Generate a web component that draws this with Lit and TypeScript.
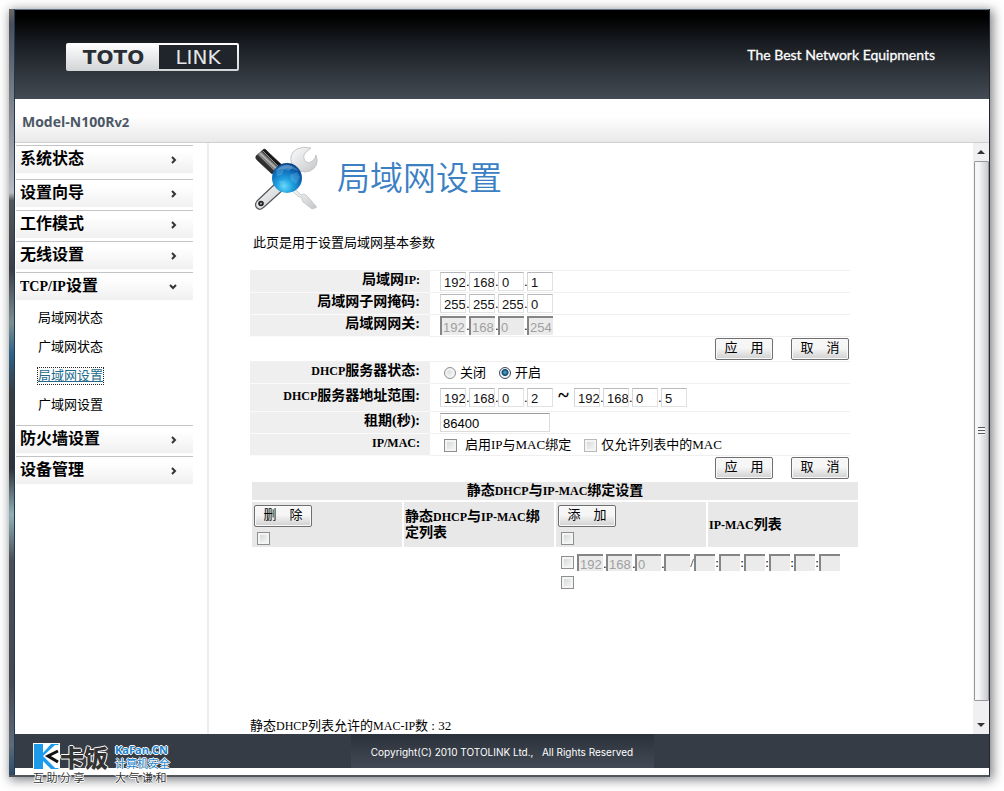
import { LitElement, html, css, svg, nothing } from "lit";
import { customElement, property } from "lit/decorators.js";

interface MenuEntry {
  label: unknown;
  open?: boolean;
  children?: { label: string; active?: boolean }[];
}

const MENU: MenuEntry[] = [
  { label: "系统状态" },
  { label: "设置向导" },
  { label: "工作模式" },
  { label: "无线设置" },
  {
    label: html`<span class="en">TCP/IP</span>设置`,
    open: true,
    children: [
      { label: "局域网状态" },
      { label: "广域网状态" },
      { label: "局域网设置", active: true },
      { label: "广域网设置" },
    ],
  },
  { label: "防火墙设置" },
  { label: "设备管理" },
];

const toolsIcon = svg`
  <defs>
    <radialGradient id="globe" cx="0.42" cy="0.78" r="0.8">
      <stop offset="0" stop-color="#5fd8fb"/>
      <stop offset="0.35" stop-color="#1f9ddd"/>
      <stop offset="0.75" stop-color="#0a5fae"/>
      <stop offset="1" stop-color="#0a3f80"/>
    </radialGradient>
    <linearGradient id="steel" x1="0" y1="0" x2="1" y2="1">
      <stop offset="0" stop-color="#fdfdfd"/>
      <stop offset="1" stop-color="#c3c6c9"/>
    </linearGradient>
    <linearGradient id="grip" x1="0" y1="1" x2="1" y2="0">
      <stop offset="0" stop-color="#111"/>
      <stop offset="0.4" stop-color="#333"/>
      <stop offset="0.5" stop-color="#bbb"/>
      <stop offset="0.6" stop-color="#1a1a1a"/>
      <stop offset="1" stop-color="#000"/>
    </linearGradient>
  </defs>
  <path d="M39 41 L47 49 L49 48 Q52 48 54 51 L62 60 Q63 62 61 62 L58 63 L49 56 Q47 53 48 51 L45 51 L36 43 Z" fill="url(#steel)" stroke="#c4c6c8" stroke-width="0.8"/>
  <path d="M22 37 L3 55 Q0 59 3 62 Q6 65 10 61 L30 43 Z" fill="url(#steel)" stroke="#55585b" stroke-width="1.2"/>
  <circle cx="7" cy="57.500" r="2.800" fill="#222"/>
  <circle cx="7" cy="57.500" r="1" fill="#bbb"/>
  <path d="M38 19 Q34 8 43 3 Q49 0 57 2 L51 7 Q48 12 52 16 Q57 18 61 12 L62 9 Q66 20 56 25 Q51 27 46 25 Z" fill="url(#steel)" stroke="#c4c6c8" stroke-width="1"/>
  <path d="M2 10 L10 3 Q12 3 14 6 L28 19 L18 28 L3 14 Q1 12 2 10 Z" fill="url(#grip)" stroke="#222" stroke-width="0.6"/>
  <path d="M5 9 L20 24 M9 5 L24 20" stroke="#8f8f8f" stroke-width="1" fill="none"/>
  <circle cx="33" cy="32" r="15" fill="url(#globe)"/>
  <path d="M22 25 Q27 19 34 19 L39 21 L35 25 L30 24 L28 29 L23 30 Z M36 29 L43 26 L46 31 L42 38 L37 34 Z M25 35 L31 35 L31 41 L27 42 Z" fill="#8fd6f7" opacity="0.25"/>
  <path d="M21 25 Q32 12 45 25 Q33 20 21 25 Z" fill="#fff" opacity="0.2"/>`;

@customElement("ip-field")
class IpField extends LitElement {
  @property({ type: Array }) parts: string[] = [];
  @property() name = "";
  @property({ type: Boolean }) off = false;

  static styles = css`
    :host {
      display: flex;
      align-items: stretch;
      height: 19px;
      font: 13px/19px "Liberation Sans", sans-serif;
    }
    .octet {
      box-sizing: border-box;
      width: 26px;
      margin: 0;
      padding: 2px 0 0 3px;
      border: 1px solid #e2e2e2;
      border-top-color: #b5b8bc;
      border-left-color: #d4d6d8;
      border-radius: 0;
      background: #fff;
      color: #111;
      font: 13px/15px "Liberation Sans", sans-serif;
    }
    .octet:disabled {
      padding: 2px 0 0 1px;
      border: 0;
      border-top: 2px solid #858585;
      border-left: 2px solid #858585;
      background: #ebebeb;
      color: #a0a0a0;
    }
    .dot {
      width: 3px;
      text-align: center;
    }
  `;

  render() {
    return this.parts.map(
      (p, i) => html`${i ? html`<span class="dot">.</span>` : nothing}<input
          class="octet"
          aria-label="${this.name} ${i + 1}"
          maxlength="3"
          .value=${p}
          ?disabled=${this.off}
        />`
    );
  }
}

@customElement("app-root")
class AppRoot extends LitElement {
  static styles = css`
    :host {
      display: block;
      background: #fff;
      color: #000;
      font: 13px/18px "Liberation Serif", "Noto Sans CJK SC", serif;
    }
    * {
      box-sizing: border-box;
    }
    .page {
      display: flex;
      min-height: 100vh;
      padding: 9px 14px 14px 9px;
    }
    .window {
      position: relative;
      display: flex;
      flex: 1;
      box-shadow: 2px 2px 10px 1px rgba(40, 44, 52, 0.6);
      border-right: 1px solid #23262c;
      border-bottom: 2px solid #50565a;
      background: #fff;
    }
    .edge {
      flex: none;
      width: 6px;
      border-right: 1px solid #1d3a55;
      background: linear-gradient(#6e6866 0, #4a4e58 2%, #7d8288 12%, #b9bcc0 24%, #55585a 25%, #3c4045 34%, #7d9090 41%, #2f6288 45%, #3a3c40 50%, #2f3236 60%, #8fb0b8 66%, #4b4f55 72%, #46484e 88%, #5f6b78 96%, #2c4a68 100%);
    }
    .shell {
      display: flex;
      flex: 1;
      flex-direction: column;
      min-width: 0;
      padding-bottom: 7px;
    }
    .banner {
      display: flex;
      align-items: center;
      justify-content: space-between;
      height: 90px;
      padding: 4px 54px 0 51px;
      border-top: 1px solid #5d7388;
      background: linear-gradient(#000 8%, #1b1f24 40%, #434b54);
      color: #fff;
    }
    .slogan {
      padding-bottom: 4px;
      font: 400 14px/20px Lato, sans-serif;
      -webkit-text-stroke: 0.3px #fff;
    }
    .logo {
      display: flex;
      width: 173px;
      height: 28px;
      padding: 2px;
      border-radius: 2px;
      background: linear-gradient(#fff, #d2d4d6);
      color: #2a2f36;
      font: 400 20px/24px "DejaVu Sans", sans-serif;
      text-align: center;
    }
    .logo-a {
      flex: 1;
      font-weight: 700;
    }
    .logo-b {
      width: 78px;
      background: #20252c;
      color: #e4e6e8;
    }
    .model {
      display: flex;
      align-items: center;
      height: 44px;
      padding: 3px 0 0 7px;
      border-bottom: 1px solid #cfcfcf;
      background: linear-gradient(#fff 40%, #e9e9e9);
      color: #4b5764;
      font: 700 14px/20px "Open Sans", sans-serif;
    }
    .small {
      font-size: 13px;
    }
    .body {
      display: flex;
      flex: 1;
    }
    .side {
      flex: none;
      width: 194px;
      padding: 2px 14px 0 1px;
      border-right: 2px solid #ededed;
      font: 700 16px/24px "Liberation Serif", "Noto Sans CJK SC", serif;
    }
    .item {
      display: flex;
      align-items: center;
      justify-content: space-between;
      width: 100%;
      height: 28px;
      margin: 0 0 3px;
      padding: 0 16px 1px 4px;
      border: 0;
      border-top: 1px solid #c4c4c4;
      background: linear-gradient(#fff 20%, #f0f0f0);
      color: #000;
      font: inherit;
      text-align: left;
    }
    .first {
      margin-bottom: 6px;
    }
    .item .en {
      font-size: 14px;
    }
    .arrow {
      width: 8px;
      height: 8px;
      margin-top: 2px;
    }
    .sub {
      display: flex;
      flex-direction: column;
      align-items: flex-start;
      gap: 13px;
      padding: 7px 0 12px 22px;
      font-size: 13px;
      font-weight: 400;
      line-height: 16px;
    }
    .sub a {
      color: #000;
      text-decoration: none;
    }
    .sub .active {
      outline: 1px dotted #222;
      color: #22698a;
      text-decoration: underline;
    }
    .main {
      display: flex;
      flex: 1;
      flex-direction: column;
      min-width: 0;
      padding: 3px 16px 0 41px;
    }
    .heading {
      display: flex;
      align-items: center;
      gap: 17px;
      padding-left: 4px;
    }
    .tools {
      width: 66px;
      height: 66px;
    }
    h1 {
      margin: 0;
      padding-bottom: 6px;
      color: #3c80c4;
      font: 350 33px/40px "Noto Sans CJK SC", sans-serif;
    }
    .intro {
      margin: 22px 0 18px;
      padding-left: 3px;
    }
    .rows {
      max-width: 600px;
      border-top: 1px solid #f0f0f0;
    }
    .row {
      display: flex;
      height: 22px;
    }
    .tall {
      height: 28px;
    }
    .name {
      display: flex;
      align-items: center;
      justify-content: flex-end;
      width: 180px;
      padding: 0 10px 3px 0;
      border-bottom: 1px solid #fafafa;
      background: #efefef;
      font-weight: 700;
      font-size: 14px;
    }
    .en {
      font-size: 12px;
    }
    .value {
      display: flex;
      flex: 1;
      align-items: center;
      padding-left: 10px;
      border-bottom: 1px solid #efefef;
    }
    .tilde {
      width: 21px;
      padding-bottom: 6px;
      font: 700 20px/20px "Liberation Serif", serif;
      text-align: center;
    }
    .lease {
      width: 110px;
      height: 19px;
      padding: 2px 0 0 2px;
      border: 1px solid #dcdcdc;
      border-top-color: #9a9da1;
      font: 13px/15px "Liberation Sans", sans-serif;
    }
    .choice {
      display: flex;
      align-items: center;
      gap: 4px;
      padding: 1px 9px 0 4px;
    }
    .wide {
      gap: 8px;
    }
    .actions {
      display: flex;
      justify-content: flex-end;
      gap: 18px;
      max-width: 600px;
      height: 24px;
      padding: 1px 1px 0 0;
    }
    .btn {
      width: 58px;
      height: 22px;
      margin: 0;
      padding: 0 0 5px;
      border: 1px solid #6f6f6f;
      border-radius: 2px;
      background: linear-gradient(#f6f6f6 45%, #d0d0d0);
      box-shadow: inset 0 0 0 1px #fafafa;
      color: #000;
      font: 13px/15px "Noto Sans CJK SC", sans-serif;
    }
    .tick,
    .radio {
      flex: none;
      width: 13px;
      height: 13px;
      margin: 0;
      appearance: none;
      border: 1px solid #8e8f8f;
      background: linear-gradient(135deg, #cfd3d6, #fafafa);
      box-shadow: inset 0 0 0 2px #f4f4f4;
    }
    .light {
      border-color: #b9b9b9;
    }
    .radio {
      width: 12px;
      height: 12px;
      border-radius: 50%;
    }
    .radio:checked {
      border-color: #3a4a5a;
      background: radial-gradient(circle at 50% 45%, #4fb0dc 0, #12476b 3px, #f2f4f6 4px);
      box-shadow: none;
    }
    .bind {
      width: 100%;
      max-width: 610px;
      border-spacing: 2px;
      table-layout: fixed;
      font-size: 14px;
      line-height: 15px;
      text-align: left;
    }
    .bind th {
      padding: 0 1px;
      background: #e8e8e8;
    }
    .bind .caption {
      height: 18px;
      text-align: center;
    }
    .bind .cell {
      height: 45px;
    }
    .stack {
      display: flex;
      flex-direction: column;
      align-items: flex-start;
      gap: 5px;
      padding-left: 1px;
    }
    .stack .tick {
      margin-left: 3px;
    }
    .bind .entry {
      padding: 3px 2px 0 5px;
    }
    .line {
      display: flex;
      align-items: center;
      height: 20px;
      font: 13px/17px "Liberation Serif", serif;
    }
    .line .tick {
      margin-right: 3px;
    }
    .line ip-field,
    .mac {
      height: 17px;
    }
    .mac {
      width: 21px;
      padding: 0;
      border: 0;
      border-top: 2px solid #858585;
      border-left: 2px solid #858585;
      background: #ebebeb;
    }
    .sep {
      width: 4px;
      text-align: center;
    }
    .limit {
      margin: auto 0 0;
      line-height: 16px;
    }
    .scroll {
      display: flex;
      flex: none;
      flex-direction: column;
      align-items: center;
      width: 16px;
      background: #f0f0f2;
    }
    .cap {
      width: 8px;
      height: 4px;
      margin: 7px 0;
    }
    .thumb {
      display: flex;
      flex: 1;
      align-items: center;
      justify-content: center;
      width: 15px;
      margin-bottom: 15px;
      border: 1px solid #97979c;
      border-radius: 1px;
      background: linear-gradient(90deg, #f6f6f7 30%, #c9cacf);
    }
    .grip {
      width: 7px;
      height: 8px;
      background: repeating-linear-gradient(#55585c 0 1px, #f6f6f6 1px 3px);
    }
    .foot {
      display: flex;
      justify-content: center;
      height: 34px;
      background: #353c46;
    }
    .copy {
      width: 303px;
      background: linear-gradient(#2a313a, #434a55);
      color: #fff;
      font: 10px/37px Inter, sans-serif;
      text-align: center;
      white-space: nowrap;
    }
    .mark {
      position: absolute;
      bottom: -9px;
      left: 24px;
      display: grid;
      grid-template-columns: 82px auto;
      color: #333;
      font: 700 12px/14px "Noto Sans CJK SC", sans-serif;
      text-shadow: 1px 0 #fff, -1px 0 #fff, 0 1px #fff, 0 -1px #fff;
    }
    .brand {
      display: flex;
      align-items: center;
      height: 27px;
      font-size: 24px;
      font-weight: 900;
      line-height: 26px;
    }
    .k {
      flex: none;
      width: 27px;
      height: 27px;
    }
    .motto {
      font-size: 11px;
      font-weight: 400;
      white-space: pre;
    }
    .blue {
      display: flex;
      flex-direction: column;
      color: #1c86d0;
      font-weight: 400;
      font-size: 11px;
      line-height: 13px;
      white-space: nowrap;
    }
    .blue .latin {
      font: 700 11px/14px "Open Sans", sans-serif;
    }
  `;

  private tick(label: string, extra = "") {
    return html`<input type="checkbox" class="tick ${extra}" aria-label=${label} />`;
  }

  private actions() {
    return html`<div class="actions">
      <button class="btn">应　用</button>
      <button class="btn">取　消</button>
    </div>`;
  }

  private menuItem(m: MenuEntry, i: number) {
    return html`<button class="item ${i === 0 ? "first" : ""}" aria-expanded=${m.open ? "true" : "false"}>
        <span>${m.label}</span>
        <svg class="arrow" viewBox="0 0 8 8" aria-hidden="true">
          <path d=${m.open ? "M1 2 L4 5 L7 2" : "M3 1 L6 4 L3 7"} fill="none" stroke="#333" stroke-width="2" />
        </svg>
      </button>
      ${m.children
        ? html`<nav class="sub">
            ${m.children.map((c) => html`<a href="#" class=${c.active ? "active" : ""}>${c.label}</a>`)}
          </nav>`
        : nothing}`;
  }

  render() {
    const en = (t: string) => html`<span class="en">${t}</span>`;
    return html`<div class="page">
      <div class="window">
        <div class="edge"></div>
        <div class="shell">
          <header class="banner">
            <div class="logo"><span class="logo-a">TOTO</span><span class="logo-b">LINK</span></div>
            <span class="slogan">The Best Network Equipments</span>
          </header>
          <div class="model"><span>Model-N100R<span class="small">v2</span></span></div>
          <div class="body">
            <aside class="side">${MENU.map((m, i) => this.menuItem(m, i))}</aside>
            <main class="main">
              <div class="heading">
                <svg class="tools" viewBox="0 0 66 66" aria-hidden="true">${toolsIcon}</svg>
                <h1>局域网设置</h1>
              </div>
              <p class="intro">此页是用于设置局域网基本参数</p>
              <div class="rows">
                <div class="row">
                  <div class="name"><span>局域网${en("IP:")}</span></div>
                  <div class="value"><ip-field name="局域网IP" .parts=${["192", "168", "0", "1"]}></ip-field></div>
                </div>
                <div class="row">
                  <div class="name"><span>局域网子网掩码:</span></div>
                  <div class="value"><ip-field name="局域网子网掩码" .parts=${["255", "255", "255", "0"]}></ip-field></div>
                </div>
                <div class="row">
                  <div class="name"><span>局域网网关:</span></div>
                  <div class="value"><ip-field off name="局域网网关" .parts=${["192", "168", "0", "254"]}></ip-field></div>
                </div>
              </div>
              ${this.actions()}
              <div class="rows">
                <div class="row">
                  <div class="name"><span>${en("DHCP")}服务器状态:</span></div>
                  <div class="value">
                    <label class="choice"><input type="radio" class="radio" name="dhcp" />关闭</label>
                    <label class="choice"><input type="radio" class="radio" name="dhcp" checked />开启</label>
                  </div>
                </div>
                <div class="row tall">
                  <div class="name"><span>${en("DHCP")}服务器地址范围:</span></div>
                  <div class="value">
                    <ip-field name="起始地址" .parts=${["192", "168", "0", "2"]}></ip-field>
                    <span class="tilde">~</span>
                    <ip-field name="结束地址" .parts=${["192", "168", "0", "5"]}></ip-field>
                  </div>
                </div>
                <div class="row">
                  <label class="name" for="lease">租期(秒):</label>
                  <div class="value"><input id="lease" class="lease" value="86400" /></div>
                </div>
                <div class="row">
                  <div class="name"><span>${en("IP/MAC:")}</span></div>
                  <div class="value">
                    <label class="choice wide"><input type="checkbox" class="tick" />启用IP与MAC绑定</label>
                    <label class="choice"><input type="checkbox" class="tick light" />仅允许列表中的MAC</label>
                  </div>
                </div>
              </div>
              ${this.actions()}
              <table class="bind">
                <tr>
                  <th class="caption" colspan="4">静态${en("DHCP")}与${en("IP-MAC")}绑定设置</th>
                </tr>
                <tr>
                  <th class="cell">
                    <div class="stack"><button class="btn">删　除</button>${this.tick("全选绑定列表")}</div>
                  </th>
                  <th class="cell">静态${en("DHCP")}与${en("IP-MAC")}绑定列表</th>
                  <th class="cell">
                    <div class="stack"><button class="btn">添　加</button>${this.tick("全选列表")}</div>
                  </th>
                  <th class="cell">${en("IP-MAC")}列表</th>
                </tr>
                <tr>
                  <td colspan="2"></td>
                  <td class="entry" colspan="2">
                    <div class="line">
                      ${this.tick("选择条目")}
                      <ip-field off name="条目IP" .parts=${["192", "168", "0", ""]}></ip-field>
                      ${[0, 1, 2, 3, 4, 5].map(
                        (n) => html`<span class="sep">${n ? ":" : "/"}</span
                          ><input class="mac" aria-label="MAC ${n + 1}" disabled />`
                      )}
                    </div>
                    <div class="line">${this.tick("选择条目")}</div>
                  </td>
                </tr>
              </table>
              <p class="limit">静态${en("DHCP")}列表允许的${en("MAC-IP")}数 : 32</p>
            </main>
            <div class="scroll" aria-hidden="true">
              <svg class="cap" viewBox="0 0 8 4"><path d="M0 4 L4 0 L8 4 Z" fill="#333" /></svg>
              <div class="thumb"><span class="grip"></span></div>
              <svg class="cap" viewBox="0 0 8 4"><path d="M0 0 L4 4 L8 0 Z" fill="#333" /></svg>
            </div>
          </div>
          <footer class="foot"><div class="copy">Copyright(C) 2010 TOTOLINK Ltd.,&nbsp;&nbsp; All Rights Reserved</div></footer>
        </div>
        <div class="mark">
          <div class="brand">
            <svg class="k" viewBox="0 0 27 27" aria-hidden="true">
              <rect width="27" height="27" fill="#fff" />
              <path d="M1 1 H10 V10 L18 1 H26 L13 13 L26 26 H18 L10 18 V26 H1 Z" fill="#1b9bea" />
              <path d="M10 13 L22 2 H27 V25 H22 Z" fill="#fff" />
              <path d="M25 8 L15 13 L25 19" fill="none" stroke="#111" stroke-width="3" />
            </svg>
            <span>卡饭</span>
          </div>
          <div class="blue"><span class="latin">KaFan.CN</span><span>计算机安全</span></div>
          <span class="motto">互 助 分 享</span>
          <span class="motto">大 气 谦 和</span>
        </div>
      </div>
    </div>`;
  }
}
